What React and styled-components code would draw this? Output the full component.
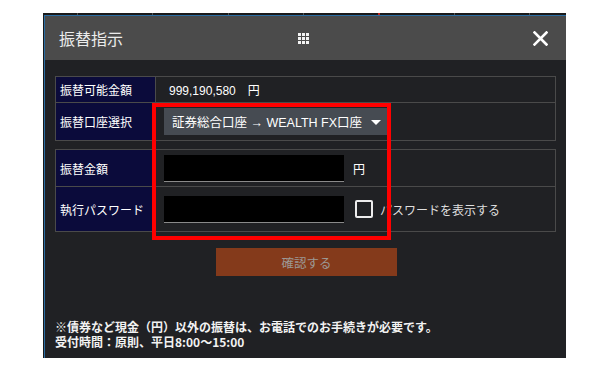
import React from "react";
import styled, { createGlobalStyle } from "styled-components";

const Global = createGlobalStyle`
  html, body { margin: 0; padding: 0; background: #ffffff; }
  body { font-family: "Liberation Sans", "Noto Sans CJK JP", sans-serif; }
`;

const Page = styled.div`
  padding: 13px 0 0 43px;
`;

const Backdrop = styled.div`
  position: relative;
  width: 523px;
  height: 345px;
  background: #1a1a1a;
  display: flex;
  flex-direction: column;
`;

const GridStrip = styled.div`
  height: 2px;
  flex: none;
  background:
    linear-gradient(to right, transparent 335px, #c0281f 335px, #c0281f 337px, transparent 337px),
    repeating-linear-gradient(to right, #1a1a1a 0, #1a1a1a 34px, #555 34px, #555 35px, #1a1a1a 35px, #1a1a1a 75.3px);
`;

const Dialog = styled.div`
  margin-left: 1px;
  flex: 1;
  display: flex;
  flex-direction: column;
  border-top: 1px solid #2a6da3;
  border-left: 1px solid #2a6da3;
  background: #202124;
`;

const TitleBar = styled.div`
  height: 44px;
  flex: none;
  background: #4b4b4b;
  display: grid;
  grid-template-columns: 1fr auto 1fr;
  align-items: center;
  padding: 0 18px 0 14px;
`;

const Title = styled.div`
  font-family: "Noto Sans CJK JP", sans-serif;
  font-size: 16px;
  color: #ececec;
`;

const CloseBtn = styled.div`
  justify-self: end;
  display: flex;
  align-items: center;
`;

const Body = styled.div`
  flex: 1;
  display: flex;
  flex-direction: column;
  padding: 16px 10px 9px 10px;
`;

const Panel = styled.div`
  display: grid;
  grid-template-columns: 99px 1fr;
  grid-template-rows: ${(p) => p.$rows};
  gap: 1px;
  background: #4a4a4a;
  border: 1px solid #4a4a4a;
  margin-top: ${(p) => p.$mt || 0}px;
`;

const Label = styled.div`
  background: #0b0b3b;
  color: #ffffff;
  font-family: "Noto Sans CJK JP", sans-serif;
  font-size: 12px;
  display: flex;
  align-items: center;
  padding-left: 4px;
`;

const Cell = styled.div`
  background: #202124;
  display: flex;
  align-items: center;
  padding-left: ${(p) => p.$pl}px;
  color: #ffffff;
  font-size: 12px;
`;

const Amount = styled.span`
  font-family: "Liberation Sans", "Noto Sans CJK JP", sans-serif;
  font-size: 12px;
  color: #ffffff;
  white-space: pre;
`;

const Select = styled.div`
  height: 27px;
  background: #464b52;
  display: flex;
  align-items: center;
  padding: 0 7px 0 8px;
  gap: 9px;
  color: #ffffff;
  font-size: 12.5px;
  white-space: nowrap;
`;

const Caret = styled.span`
  width: 0;
  height: 0;
  border-left: 5px solid transparent;
  border-right: 5px solid transparent;
  border-top: 5px solid #ffffff;
  margin-top: 1px;
`;

const Input = styled.div`
  width: 180px;
  height: 26px;
  background: #000000;
  border-bottom: 1px solid #8a8a8a;
  flex: none;
`;

const Unit = styled.span`
  margin-left: 9px;
  font-family: "Noto Sans CJK JP", sans-serif;
  font-size: 12px;
  color: #ffffff;
`;

const Check = styled.span`
  margin-left: 11px;
  width: 14px;
  height: 14px;
  border: 2px solid #ececec;
  border-radius: 2px;
  flex: none;
`;

const CheckLabel = styled.span`
  margin-left: 7px;
  font-family: "Noto Sans CJK JP", sans-serif;
  font-size: 12px;
  color: #dedede;
`;

const Button = styled.div`
  align-self: center;
  margin-top: 16px;
  width: 181px;
  height: 28px;
  background: #843a1b;
  color: #9c9894;
  font-family: "Noto Sans CJK JP", sans-serif;
  font-size: 12.5px;
  display: flex;
  align-items: center;
  justify-content: center;
  margin-left: 2px;
`;

const Note = styled.div`
  margin-top: auto;
  display: flex;
  flex-direction: column;
`;

const NoteLine = styled.div`
  font-family: "Noto Sans CJK JP", sans-serif;
  font-weight: 700;
  font-size: 12px;
  line-height: 15px;
  height: 15px;
  color: #f2f2f2;
  white-space: nowrap;
`;

const Highlight = styled.div`
  position: absolute;
  left: 109px;
  top: 90px;
  width: 231px;
  height: 129px;
  border: 4px solid #ff0000;
  pointer-events: none;
`;

const GridIcon = () => (
  <svg width="11" height="11" viewBox="0 0 11 11">
    {[0, 4, 8].map((y) =>
      [0, 4, 8].map((x) => (
        <rect key={`${x}-${y}`} x={x} y={y} width="3" height="3" fill="#f4f4f4" />
      ))
    )}
  </svg>
);

const CloseIcon = () => (
  <svg width="15" height="15" viewBox="0 0 15 15">
    <path d="M1.5 1.5 L13.5 13.5 M13.5 1.5 L1.5 13.5" stroke="#ffffff" strokeWidth="2.6" strokeLinecap="square" />
  </svg>
);

export default function App() {
  return (
    <>
      <Global />
      <Page>
        <Backdrop>
          <GridStrip />
          <Dialog>
            <TitleBar>
              <Title>振替指示</Title>
              <GridIcon />
              <CloseBtn>
                <CloseIcon />
              </CloseBtn>
            </TitleBar>
            <Body>
              <Panel $rows="25px 37px">
                <Label>振替可能金額</Label>
                <Cell $pl={13}>
                  <Amount>999,190,580　円</Amount>
                </Cell>
                <Label>振替口座選択</Label>
                <Cell $pl={8}>
                  <Select>
                    <span>証券総合口座 → WEALTH FX口座</span>
                    <Caret />
                  </Select>
                </Cell>
              </Panel>
              <Panel $rows="36px 44px" $mt={8}>
                <Label>振替金額</Label>
                <Cell $pl={8}>
                  <Input />
                  <Unit>円</Unit>
                </Cell>
                <Label>執行パスワード</Label>
                <Cell $pl={8}>
                  <Input />
                  <Check />
                  <CheckLabel>パスワードを表示する</CheckLabel>
                </Cell>
              </Panel>
              <Button>確認する</Button>
              <Note>
                <NoteLine>※債券など現金（円）以外の振替は、お電話でのお手続きが必要です。</NoteLine>
                <NoteLine>受付時間：原則、平日8:00〜15:00</NoteLine>
              </Note>
            </Body>
          </Dialog>
          <Highlight />
        </Backdrop>
      </Page>
    </>
  );
}
